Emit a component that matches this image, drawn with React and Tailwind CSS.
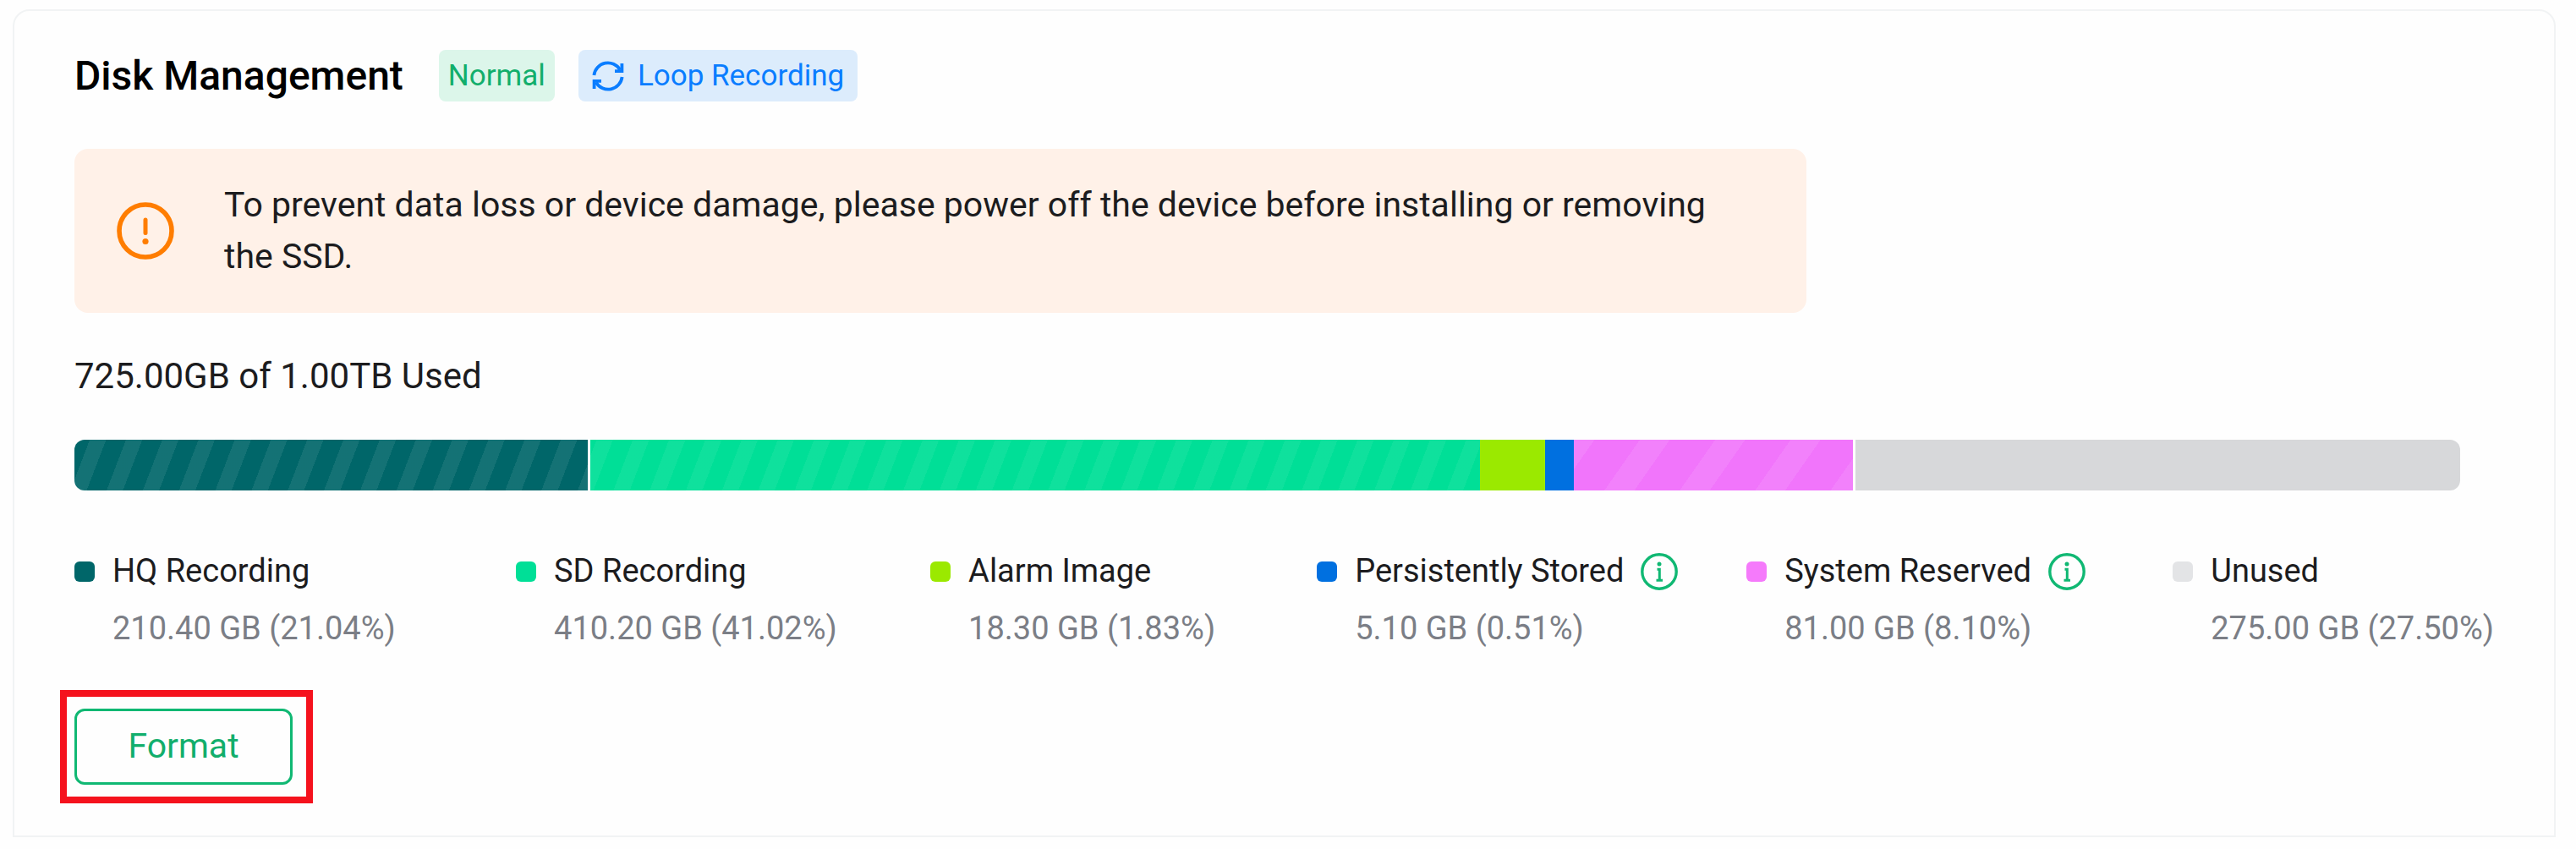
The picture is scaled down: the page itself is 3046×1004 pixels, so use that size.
import React from "react";

const STRIPES = {
  hq: "bg-[#006669] bg-[repeating-linear-gradient(111deg,transparent_0_17px,rgba(255,255,255,0.08)_17px_35px,transparent_35px_40px)]",
  sd: "bg-[#00df97] bg-[repeating-linear-gradient(111deg,transparent_0_7px,rgba(255,255,255,0.06)_7px_25px,transparent_25px_40px)]",
  system: "bg-[#f175fb] bg-[repeating-linear-gradient(125deg,rgba(255,255,255,0.09)_0_20px,transparent_20px_64px,rgba(255,255,255,0.09)_64px_73px)]",
};

const segments = [
  { name: "HQ Recording", size: "210.40 GB (21.04%)", share: 607, bar: STRIPES.hq, swatch: "bg-[#006669]" },
  { name: "SD Recording", size: "410.20 GB (41.02%)", share: 1053, bar: `ml-[3px] ${STRIPES.sd}`, swatch: "bg-[#00df97]" },
  { name: "Alarm Image", size: "18.30 GB (1.83%)", share: 77, bar: "bg-[#9be900]", swatch: "bg-[#9be900]" },
  { name: "Persistently Stored", size: "5.10 GB (0.51%)", share: 34, bar: "bg-[#0070e0]", swatch: "bg-[#0070e0]", info: true },
  { name: "System Reserved", size: "81.00 GB (8.10%)", share: 330, bar: STRIPES.system, swatch: "bg-[#f57afb]", info: true },
  { name: "Unused", size: "275.00 GB (27.50%)", share: 716, bar: "ml-[3px] bg-[#d7d8da]", swatch: "bg-[#e3e4e6]" },
];

function LoopIcon() {
  return (
    <svg viewBox="0 0 38 38" className="size-[38px]" fill="none" stroke="#0a7dff" strokeWidth="3.8">
      <path d="M2.4 18A16.6 16.6 0 0 1 33.2 11.5" />
      <path d="M35.6 20A16.6 16.6 0 0 1 4.8 26.5" />
      <path d="M35.4 4V13.2H27" />
      <path d="M2.6 34V24.8H11" />
    </svg>
  );
}

function WarningIcon() {
  return (
    <svg viewBox="0 0 68 68" className="size-[68px] shrink-0" fill="none">
      <circle cx="34" cy="34" r="31" stroke="#ff7d00" strokeWidth="5.6" />
      <path d="M34 21V36.5" stroke="#ff7d00" strokeWidth="5" strokeLinecap="round" />
      <circle cx="34" cy="46.5" r="3.6" fill="#ff7d00" />
    </svg>
  );
}

function InfoIcon() {
  return (
    <svg viewBox="0 0 44 44" className="size-11" fill="none" stroke="#10b873">
      <circle cx="22" cy="22" r="20.2" strokeWidth="3.4" />
      <circle cx="22" cy="13" r="2.5" fill="#10b873" stroke="none" />
      <path d="M19.5 19.2H22.3V32M18.5 32.2H26" strokeWidth="3" />
    </svg>
  );
}

export default function App() {
  return (
    <div className="min-h-screen bg-[#fefefe] pt-[11px] pr-6 pb-4 pl-[15px] font-['Roboto',sans-serif] text-[#1c1c1e]">
      <section className="rounded-t-[20px] border-2 border-[#f1f3f4] px-[71px] pt-[46px] pb-[38px]">
        <header className="flex items-center">
          <h1 className="text-[48px] leading-[61px] font-medium text-black">Disk Management</h1>
          <span className="ml-[42px] rounded-lg bg-[#dcf6ea] px-[11px] text-[35px] leading-[61px] text-[#12ae6c]">
            Normal
          </span>
          <span className="ml-7 flex items-center gap-4 rounded-lg bg-[#dcecfc] px-4 text-[35px] leading-[61px] text-[#0a7dff]">
            <LoopIcon />
            Loop Recording
          </span>
        </header>

        <div
          role="alert"
          className="mt-14 flex max-w-[2048px] items-center gap-[59px] rounded-2xl bg-[#fff1e8] py-9 pr-16 pl-[50px]"
        >
          <WarningIcon />
          <p className="text-[41px] leading-[61px]">
            To prevent data loss or device damage, please power off the device before installing or removing the SSD.
          </p>
        </div>

        <p className="mt-11 text-[42px] leading-[61px]">725.00GB of 1.00TB Used</p>

        <div className="mt-[45px] mr-10 flex h-[60px] overflow-hidden rounded-xl">
          {segments.map((s) => (
            <div key={s.name} className={s.bar} style={{ flexGrow: s.share, flexBasis: 0 }} />
          ))}
        </div>

        <ul className="mt-[65px] grid grid-cols-[522fr_490fr_457fr_508fr_504fr_auto] whitespace-nowrap">
          {segments.map((s) => (
            <li key={s.name} className="grid grid-cols-[24px_auto] items-center justify-start gap-x-[21px]">
              <span className={`size-6 rounded-md ${s.swatch}`} />
              <span className="flex items-center gap-5 text-[38px] leading-[61px]">
                {s.name}
                {s.info && <InfoIcon />}
              </span>
              <span className="col-start-2 text-[38px] leading-[74px] text-[#7b7e86]">{s.size}</span>
            </li>
          ))}
        </ul>

        <div className="mt-9 -ml-[17px] w-fit border-8 border-[#f5121d] py-3.5 pr-4 pl-[9px]">
          <button
            type="button"
            className="h-[90px] w-[258px] rounded-xl border-[3px] border-[#10b873] text-[41px] text-[#12ae6c]"
          >
            Format
          </button>
        </div>
      </section>
    </div>
  );
}
